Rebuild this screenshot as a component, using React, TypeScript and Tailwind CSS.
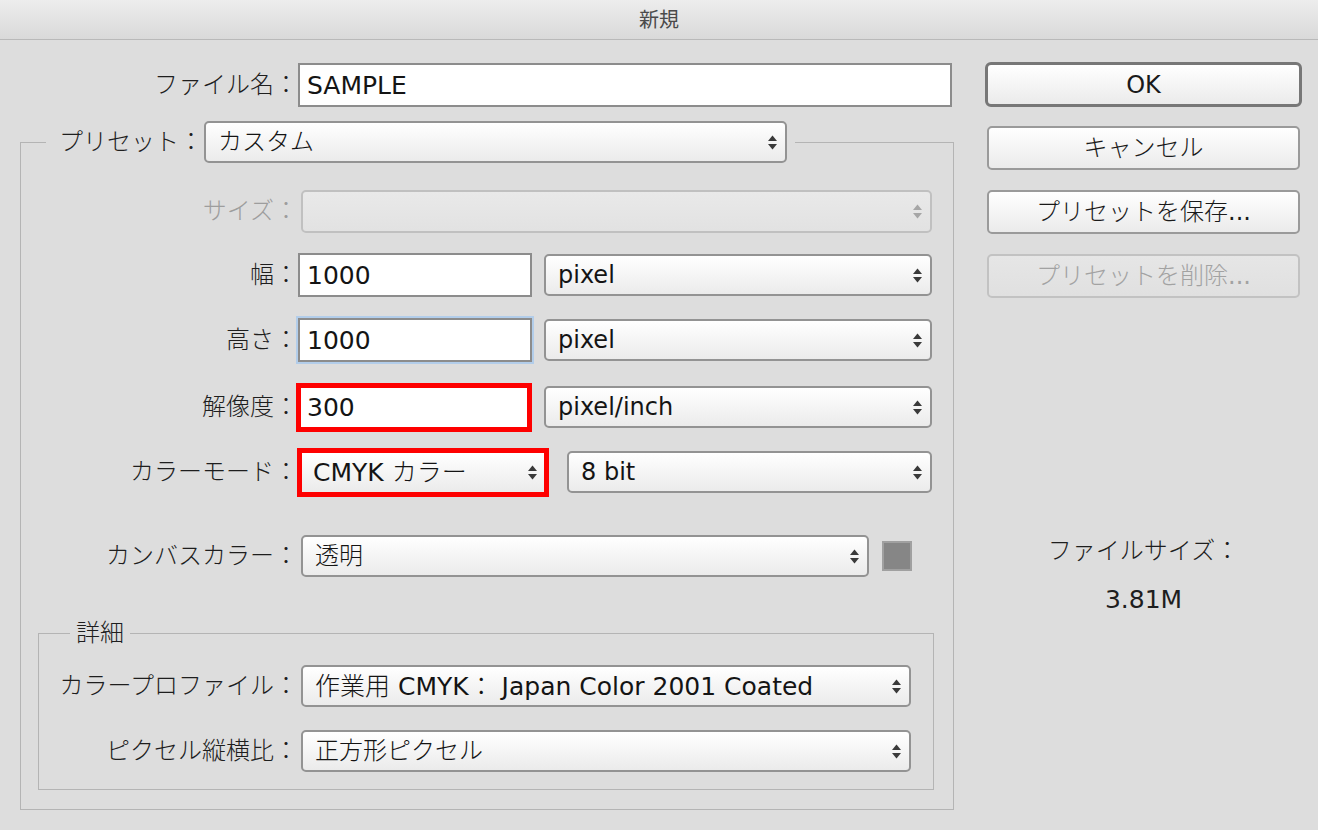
import React from "react";

const FONT = "font-['DejaVu_Sans','Noto_Sans_CJK_JP',sans-serif]";
const LINE = "border-[#b4b4b4]";

function Arrows({ muted = false }: { muted?: boolean }) {
  const c = muted ? "#a6a6a6" : "#3a3a3a";
  return (
    <svg width="9" height="15" viewBox="0 0 9 15" className="shrink-0">
      <path d="M0 6 L4.5 0.5 L9 6 Z" fill={c} />
      <path d="M0 9 L4.5 14.5 L9 9 Z" fill={c} />
    </svg>
  );
}

function Select({
  className = "",
  children,
  textClass = "text-[24px]",
  disabled = false,
}: {
  className?: string;
  children?: React.ReactNode;
  textClass?: string;
  disabled?: boolean;
}) {
  return (
    <div
      className={`flex h-[42px] shrink-0 items-center justify-between rounded-[5px] border-2 pl-[12px] pr-[8px] ${
        disabled
          ? "border-[#c0c0c0] bg-linear-to-b from-[#e9e9e9] to-[#e2e2e2]"
          : "border-[#939393] bg-linear-to-b from-white to-[#ebebeb]"
      } ${className}`}
    >
      <span className={`${textClass} whitespace-pre leading-none text-[#141414]`}>{children}</span>
      <Arrows muted={disabled} />
    </div>
  );
}

function Label({
  children,
  className = "",
  muted = false,
}: {
  children: React.ReactNode;
  className?: string;
  muted?: boolean;
}) {
  return (
    <div
      className={`shrink-0 whitespace-nowrap text-right text-[24px] font-light leading-none ${
        muted ? "text-[#9d9d9d]" : "text-[#1e1e1e]"
      } ${className}`}
    >
      {children}
    </div>
  );
}

function TextField({ value, className = "" }: { value: string; className?: string }) {
  return (
    <div
      className={`flex h-[44px] shrink-0 items-center border-2 border-[#8c8c8c] bg-white pl-[7px] text-[25px] leading-none text-[#141414] ${className}`}
    >
      {value}
    </div>
  );
}

function Button({
  children,
  className = "",
  disabled = false,
}: {
  children: React.ReactNode;
  className?: string;
  disabled?: boolean;
}) {
  return (
    <div
      className={`flex h-[44px] items-center justify-center rounded-[5px] border-2 text-[24px] leading-none ${
        disabled
          ? "border-[#c2c2c2] bg-linear-to-b from-[#e6e6e6] to-[#e0e0e0] text-[#a2a2a2]"
          : "border-[#9a9a9a] bg-linear-to-b from-white to-[#ebebeb] text-[#1a1a1a]"
      } ${className}`}
    >
      {children}
    </div>
  );
}

export default function App() {
  return (
    <div className={`${FONT} flex h-[830px] w-[1318px] flex-col overflow-hidden bg-[#dddddd]`}>
      {/* Title bar */}
      <div className="flex h-[40px] shrink-0 items-center justify-center border-b border-[#b9b9b9] bg-linear-to-b from-[#ededed] to-[#d9d9d9] text-[20px] leading-none text-[#4a4a4a]">
        新規
      </div>

      <div className="flex">
        {/* Left column */}
        <div className="flex w-[955px] shrink-0 flex-col">
          <div className="mt-[23px] flex h-[44px] items-center">
            <Label className="w-[298px]">ファイル名：</Label>
            <TextField value="SAMPLE" className="w-[654px]" />
          </div>

          {/* Preset group */}
          <div className="ml-[20px] mt-[14px] flex w-[934px] flex-col">
            <div className="flex h-[42px]">
              <div className={`mt-[21px] w-[26px] border-l border-t ${LINE}`} />
              <div className="flex items-center pl-[13px] pr-[8px]">
                <Label>プリセット：</Label>
                <Select className="ml-[1px] w-[583px]" textClass="text-[24px] font-light">
                  カスタム
                </Select>
              </div>
              <div className={`mt-[21px] flex-1 border-r border-t ${LINE}`} />
            </div>

            <div className={`flex flex-col border-x border-b pb-[19px] ${LINE}`}>
              <div className="mt-[26px] flex h-[44px] items-center">
                <Label muted className="w-[277px]">
                  サイズ：
                </Label>
                <Select disabled className="ml-[3px] h-[43px] w-[631px]" />
              </div>

              <div className="mt-[20px] flex h-[44px] items-center">
                <Label className="w-[277px]">幅：</Label>
                <TextField value="1000" className="w-[234px]" />
                <Select className="ml-[12px] w-[388px]">pixel</Select>
              </div>

              <div className="mt-[21px] flex h-[44px] items-center">
                <Label className="w-[277px]">高さ：</Label>
                <TextField value="1000" className="w-[234px] ring-2 ring-[#b2cdea]" />
                <Select className="ml-[12px] w-[388px]">pixel</Select>
              </div>

              <div className="mt-[23px] flex h-[44px] items-center">
                <Label className="w-[277px]">解像度：</Label>
                <div className="ml-[-2px] flex h-[49px] w-[236px] shrink-0 items-center border-[5px] border-[#fe0000] bg-white pl-[6px] text-[25px] leading-none text-[#141414]">
                  300
                </div>
                <Select className="ml-[12px] w-[388px]">pixel/inch</Select>
              </div>

              <div className="mt-[21px] flex h-[44px] items-center">
                <Label className="w-[277px]">カラーモード：</Label>
                <div className="ml-[-1px] flex h-[49px] w-[252px] shrink-0 items-center justify-between border-[5px] border-[#fe0000] bg-linear-to-b from-white to-[#ebebeb] pl-[11px] pr-[7px]">
                  <span className="whitespace-pre text-[25px] leading-none text-[#141414]">
                    CMYK <span className="font-light">カラー</span>
                  </span>
                  <Arrows />
                </div>
                <Select className="ml-[18px] w-[365px]">8 bit</Select>
              </div>

              <div className="mt-[40px] flex h-[44px] items-center">
                <Label className="w-[277px]">カンバスカラー：</Label>
                <Select className="ml-[3px] w-[568px]" textClass="text-[24px] font-light">
                  透明
                </Select>
                <div className="ml-[13px] h-[30px] w-[30px] shrink-0 border-2 border-[#a0a0a0] bg-[#868686]" />
              </div>

              {/* Detail group */}
              <div className="ml-[17px] mt-[41px] flex w-[896px] flex-col">
                <div className="flex h-[28px]">
                  <div className={`mt-[14px] w-[32px] border-l border-t ${LINE}`} />
                  <div className="flex items-center px-[6px] text-[24px] font-light leading-none text-[#1e1e1e]">
                    詳細
                  </div>
                  <div className={`mt-[14px] flex-1 border-r border-t ${LINE}`} />
                </div>
                <div className={`flex flex-col border-x border-b pb-[16px] ${LINE}`}>
                  <div className="mt-[17px] flex h-[44px] items-center">
                    <Label className="w-[259px]">カラープロファイル：</Label>
                    <Select className="ml-[3px] w-[610px]" textClass="text-[25px]">
                      <span className="font-light">作業用</span> CMYK<span className="font-light">：</span> Japan Color 2001 Coated
                    </Select>
                  </div>
                  <div className="mt-[21px] flex h-[44px] items-center">
                    <Label className="w-[259px]">ピクセル縦横比：</Label>
                    <Select className="ml-[3px] w-[610px]" textClass="text-[24px] font-light">
                      正方形ピクセル
                    </Select>
                  </div>
                </div>
              </div>
            </div>
          </div>
        </div>

        {/* Right column */}
        <div className="ml-[30px] flex w-[317px] shrink-0 flex-col">
          <div className="mt-[22px] flex h-[45px] w-[317px] items-center justify-center rounded-[6px] border-[3px] border-[#777777] bg-linear-to-b from-white to-[#ebebeb] text-[24px] leading-none text-[#1a1a1a]">
            OK
          </div>
          <Button className="ml-[2px] mt-[19px] w-[313px]">
            <span className="font-light">キャンセル</span>
          </Button>
          <Button className="ml-[2px] mt-[20px] w-[313px]">
            <span className="font-light">プリセットを保存</span>
            <span>...</span>
          </Button>
          <Button disabled className="ml-[2px] mt-[20px] w-[313px]">
            <span className="font-light">プリセットを削除</span>
            <span>...</span>
          </Button>
          <div className="mt-[237px] flex h-[32px] items-center justify-center text-[24px] font-light leading-none text-[#1e1e1e]">
            ファイルサイズ：
          </div>
          <div className="mt-[16px] flex h-[32px] items-center justify-center text-[25px] leading-none text-[#1e1e1e]">
            3.81M
          </div>
        </div>
      </div>
    </div>
  );
}
